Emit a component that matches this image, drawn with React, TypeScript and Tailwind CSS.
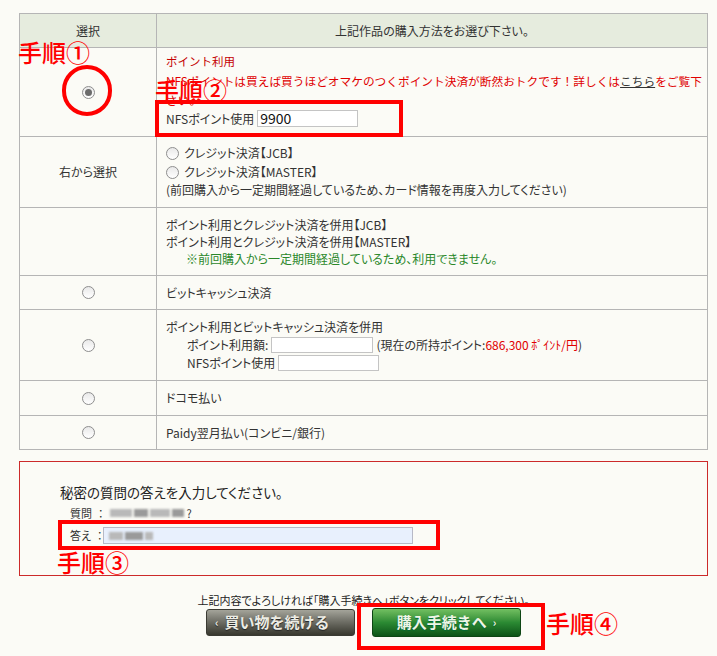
import React from 'react';

const font = "font-['Noto_Sans_CJK_JP','Noto_Sans',sans-serif]";

function Radio({ checked = false }: { checked?: boolean }) {
  return (
    <span className="inline-flex w-[13px] h-[13px] rounded-full border border-[#8e8e8e] bg-gradient-to-b from-[#e9e9e9] to-white items-center justify-center shrink-0">
      {checked && <span className="w-[7px] h-[7px] rounded-full bg-[#6b6b6b]" />}
    </span>
  );
}

function Blur({ w }: { w: number[] }) {
  return (
    <span className="inline-flex items-center gap-[2px] align-middle">
      {w.map((x, i) => (
        <span key={i} className={`inline-block h-[8px] blur-[1px] ${i % 2 ? 'bg-[#9a9a9a]' : 'bg-[#b9b9b9]'}`} style={{ width: x }} />
      ))}
    </span>
  );
}

const note = "absolute text-[24px] leading-none font-medium text-[#ff0000] [font-feature-settings:normal]";
const box = "absolute border-[4px] border-[#ff0000]";

export default function App() {
  const td = 'border border-[#b5b5b5]';
  const left = `${td} w-[137px] text-center align-middle`;
  const right = `${td} pl-[9px] align-middle`;

  return (
    <div className={`relative w-[717px] h-[656px] overflow-hidden bg-[#fbfbf6] pt-[13px] pl-[19px] text-[#333] ${font} [font-feature-settings:'palt']`}>
      <table className="w-[689px] border-collapse text-[12px] leading-[18px]">
        <thead>
          <tr className="bg-[#e6ecde]">
            <th className={`${td} h-[34px] w-[137px] font-normal`}>選択</th>
            <th className={`${td} font-normal`}>上記作品の購入方法をお選び下さい。</th>
          </tr>
        </thead>
        <tbody>
          <tr>
            <td className={`${left} h-[89px]`}>
              <div className="flex justify-center"><Radio checked /></div>
            </td>
            <td className={`${right} !align-top pt-[4px] leading-[19px] [font-feature-settings:normal]`}>
              <div className="text-[11.5px] text-[#c40000]">ポイント利用</div>
              <div className="text-[11.7px] text-[#e00000] whitespace-nowrap">
                NFSポイントは買えば買うほどオマケのつくポイント決済が断然おトクです！詳しくは<span className="underline text-[#333]">こちら</span>をご覧下
              </div>
              <div className="text-[11.7px] text-[#e00000]">さい。</div>
              <div className="flex items-center gap-[3px] text-[12px] [font-feature-settings:'palt']">
                NFSポイント使用
                <span className="w-[101px] h-[17px] border border-[#c4c4c4] bg-white text-[14px] leading-[15px] pl-[2px] text-[#111]">9900</span>
              </div>
            </td>
          </tr>
          <tr>
            <td className={`${left} h-[71px]`}>右から選択</td>
            <td className={`${right} leading-[18.5px]`}>
              <div className="flex items-center gap-[5px]"><Radio />クレジット決済【JCB】</div>
              <div className="flex items-center gap-[5px]"><Radio />クレジット決済【MASTER】</div>
              <div>(前回購入から一定期間経過しているため、カード情報を再度入力してください)</div>
            </td>
          </tr>
          <tr>
            <td className={`${left} h-[68px]`} />
            <td className={`${right} leading-[17px]`}>
              <div>ポイント利用とクレジット決済を併用【JCB】</div>
              <div>ポイント利用とクレジット決済を併用【MASTER】</div>
              <div className="pl-[20px] text-[#2a882a]">※前回購入から一定期間経過しているため、利用できません。</div>
            </td>
          </tr>
          <tr>
            <td className={`${left} h-[34px]`}><div className="flex justify-center"><Radio /></div></td>
            <td className={right}>ビットキャッシュ決済</td>
          </tr>
          <tr>
            <td className={`${left} h-[71px]`}><div className="flex justify-center"><Radio /></div></td>
            <td className={right}>
              <div>ポイント利用とビットキャッシュ決済を併用</div>
              <div className="pl-[21px] flex items-center gap-[3px]">
                ポイント利用額:
                <span className="w-[102px] h-[16px] border border-[#c4c4c4] bg-white" />
                <span>(現在の所持ポイント:<span className="text-[#e00000]">686,300 ﾎﾟｲﾝﾄ/円</span>)</span>
              </div>
              <div className="pl-[21px] flex items-center gap-[3px]">
                NFSポイント使用
                <span className="w-[101px] h-[16px] border border-[#c4c4c4] bg-white" />
              </div>
            </td>
          </tr>
          <tr>
            <td className={`${left} h-[35px]`}><div className="flex justify-center"><Radio /></div></td>
            <td className={right}>ドコモ払い</td>
          </tr>
          <tr>
            <td className={`${left} h-[34px]`}><div className="flex justify-center"><Radio /></div></td>
            <td className={right}>Paidy翌月払い(コンビニ/銀行)</td>
          </tr>
        </tbody>
      </table>

      <div className="mt-[11px] w-[689px] h-[115px] border border-[#cc2a2a] pt-[20px] pl-[40px]">
        <div className="text-[13.5px] leading-[20px] text-[#222]">秘密の質問の答えを入力してください。</div>
        <div className="mt-[2px] pl-[10px] text-[11px] leading-[18px] flex items-center">
          <span>質問</span><span className="ml-[6px] mr-[6px]">：</span>
          <Blur w={[22, 14, 20, 12]} />
          <span className="ml-[3px]">?</span>
        </div>
        <div className="mt-[5px] pl-[10px] text-[11px] flex items-center">
          <span>答え</span><span className="ml-[6px] mr-[1px]">：</span>
          <span className="w-[310px] h-[17px] border border-[#b7b9c6] bg-[#e8f0fd] flex items-center pl-[5px]">
            <Blur w={[14, 18, 8]} />
          </span>
        </div>
      </div>

      <div className="w-[689px] mt-[17px] text-center text-[11px] leading-[14px] text-[#222]">
        上記内容でよろしければ「購入手続きへ」ボタンをクリックしてください。
      </div>
      <div className="w-[689px] mt-[2px] flex justify-center gap-[17px]">
        <div className="w-[149px] h-[27px] rounded-[3px] border border-[#3a3a33] bg-gradient-to-b from-[#a4a49a] via-[#6b6b62] to-[#38382f] flex items-center pl-[8px] gap-[4px] text-[15px] font-bold text-[#ecece4] [text-shadow:0_1px_1px_#222] [font-feature-settings:normal]">
          <span className="text-[11px]">‹</span>
          <span className="pl-[2px]">買い物を続ける</span>
        </div>
        <div className="w-[149px] h-[29px] -mt-[1px] rounded-[3px] border border-[#0d4514] bg-gradient-to-b from-[#72c062] via-[#2b8a33] to-[#0c5418] flex items-center justify-center gap-[6px] text-[15px] font-bold text-[#eef5e6] [text-shadow:0_1px_1px_#063] [font-feature-settings:normal]">
          <span>購入手続きへ</span>
          <span className="text-[11px]">›</span>
        </div>
      </div>

      {/* annotations */}
      <div className={`${note} left-[18px] top-[40px]`}>手順①</div>
      <div className="absolute left-[62px] top-[65px] w-[50px] h-[51px] rounded-full border-[4px] border-[#ff0000]" />
      <div className={`${note} left-[155px] top-[78px]`}>手順②</div>
      <div className={`${box} left-[155px] top-[100px] w-[248px] h-[37px]`} />
      <div className={`${box} left-[58px] top-[520px] w-[382px] h-[30px]`} />
      <div className={`${note} left-[57px] top-[550px]`}>手順③</div>
      <div className={`${box} left-[357px] top-[603px] w-[188px] h-[47px]`} />
      <div className={`${note} left-[546px] top-[611px]`}>手順④</div>
    </div>
  );
}
